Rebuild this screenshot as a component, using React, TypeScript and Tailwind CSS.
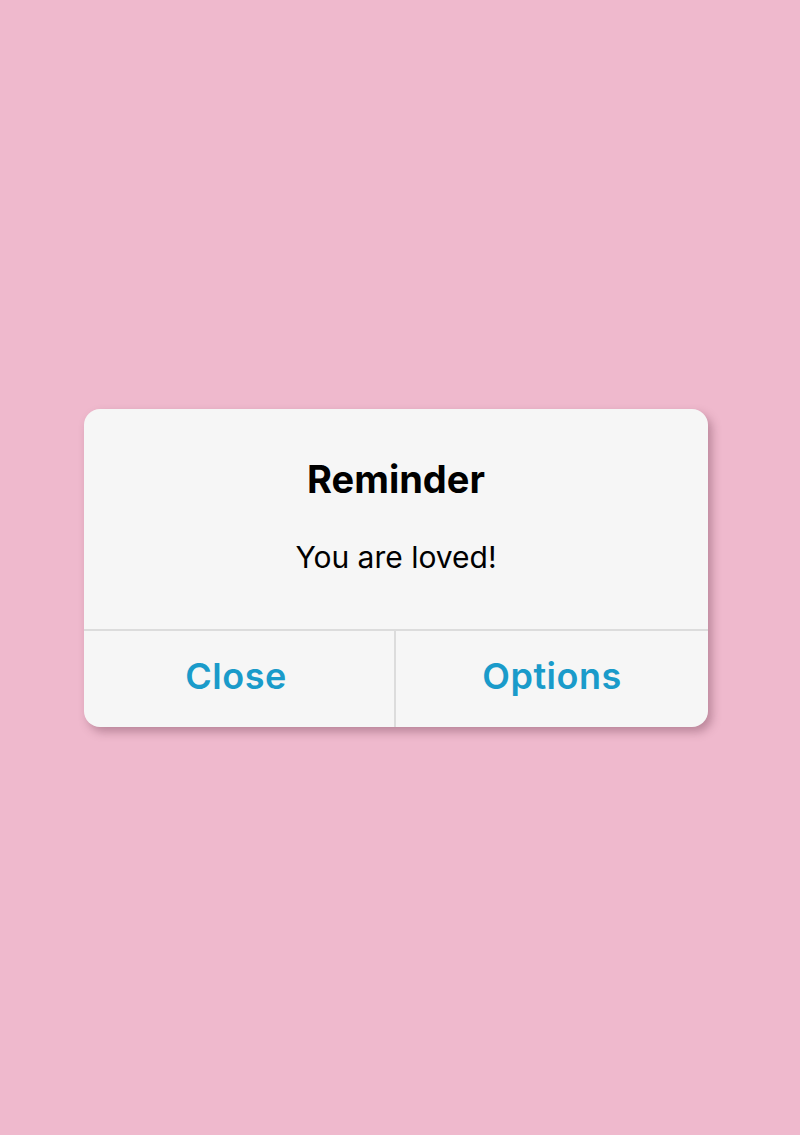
import React from "react";

export default function App() {
  return (
    <div className="min-h-[1135px] w-full bg-[#efb9cd] flex items-center" style={{ fontFamily: "Inter, 'Liberation Sans', sans-serif" }}>
      <div className="ml-[84px] w-[624px] h-[318px] rounded-[16px] bg-[#f6f6f6] shadow-[4px_5px_10px_rgba(90,40,60,0.35)] flex flex-col overflow-hidden">
        <div className="h-[220px] flex flex-col items-center pt-[48px]">
          <div className="text-[38px] leading-[44px] font-bold text-black">Reminder</div>
          <div className="mt-[38px] text-[30px] leading-[36px] font-normal text-black">You are loved!</div>
        </div>
        <div className="h-[2px] bg-[#dcdcdc]" />
        <div className="flex flex-1">
          <div className="w-[310px] shrink-0 flex justify-center pt-[23px] pr-[6px] text-[36px] leading-[44px] tracking-[0.5px] font-semibold text-[#1a9bca]">Close</div>
          <div className="w-[2px] shrink-0 bg-[#dcdcdc]" />
          <div className="w-[312px] shrink-0 flex justify-center pt-[23px] text-[36px] leading-[44px] tracking-[0.5px] font-semibold text-[#1a9bca]">Options</div>
        </div>
      </div>
    </div>
  );
}
